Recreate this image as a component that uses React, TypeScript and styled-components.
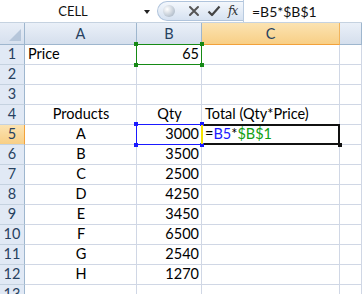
import React from "react";
import styled, { createGlobalStyle, css } from "styled-components";

const GlobalStyle = createGlobalStyle`
  html, body {
    margin: 0;
    padding: 0;
    background: #ffffff;
  }
  body {
    font-family: Lato, "Liberation Sans", sans-serif;
    width: 362px;
    height: 294px;
    overflow: hidden;
  }
`;

const Bar = styled.div`
  display: flex;
  height: 22px;
  border-bottom: 1px solid #c5d2e0;
  background: #ffffff;
`;

const NameBox = styled.div`
  width: 157px;
  display: flex;
  align-items: center;
  font-size: 13px;
  color: #111;
`;

const NameText = styled.span`
  flex: 1;
  text-align: center;
  padding-left: 2px;
`;

const Arrow = styled.span`
  width: 0;
  height: 0;
  border-left: 3.5px solid transparent;
  border-right: 3.5px solid transparent;
  border-top: 4px solid #222;
  margin-right: 7px;
  margin-top: 1px;
`;

const Buttons = styled.div`
  width: 86px;
  margin-top: 1px;
  height: 20px;
  display: flex;
  align-items: center;
  gap: 7px;
  padding-left: 5px;
  box-sizing: border-box;
  border-radius: 11px 0 0 11px;
  background: linear-gradient(#f3f7fc, #d6e2f1);
  border: 1px solid #b0c4dc;
  border-right: none;
`;

const Orb = styled.span`
  width: 12px;
  height: 12px;
  border-radius: 50%;
  background: radial-gradient(circle at 35% 35%, #ffffff, #b8c3cf 70%);
  margin-right: 6px;
`;

const Fx = styled.span`
  font-family: "DejaVu Serif", serif;
  font-style: italic;
  font-size: 12px;
  color: #333;
  letter-spacing: -1px;
`;

const FormulaInput = styled.div`
  flex: 1;
  display: flex;
  align-items: center;
  padding-left: 8px;
  font-size: 14px;
  color: #111;
  border-left: 1px solid #b9cbe0;
`;

const Sheet = styled.div`
  display: grid;
  grid-template-columns: 25px 112px 65px 138px 1fr;
  grid-auto-rows: 20px;
  grid-template-rows: 22px;
`;

const Corner = styled.div`
  background: linear-gradient(#e8eef7, #d6e0ee);
  border-right: 1px solid #9eb6ce;
  border-bottom: 1px solid #9eb6ce;
  position: relative;
  overflow: hidden;
`;

const Triangle = styled.span`
  position: absolute;
  right: 3px;
  bottom: 3px;
  width: 0;
  height: 0;
  border-left: 12px solid transparent;
  border-bottom: 12px solid #b6c6da;
`;

const ColHead = styled.div<{ $active?: boolean }>`
  display: flex;
  align-items: center;
  justify-content: center;
  font-size: 14.5px;
  color: #27415f;
  border-right: 1px solid #9eb6ce;
  border-bottom: 1px solid #9eb6ce;
  background: linear-gradient(#eaf0f8, #d5dfed);
  ${(p) =>
    p.$active &&
    css`
      background: linear-gradient(#fbe3b2, #f8cf86);
      border-bottom-color: #f2a13a;
      border-right-color: #f2b45c;
    `}
`;

const RowHead = styled.div<{ $active?: boolean }>`
  display: flex;
  align-items: flex-end;
  justify-content: center;
  padding-bottom: 2px;
  box-sizing: border-box;
  font-size: 14.5px;
  color: #27415f;
  border-right: 1px solid #9eb6ce;
  border-bottom: 1px solid #c5d2e0;
  background: #e1e9f5;
  ${(p) =>
    p.$active &&
    css`
      background: linear-gradient(#fbe3b2, #f8cf86);
      border-right-color: #f2a13a;
    `}
`;

const Cell = styled.div<{ $align?: "left" | "center" | "right" }>`
  position: relative;
  display: flex;
  align-items: flex-end;
  justify-content: ${(p) =>
    p.$align === "right" ? "flex-end" : p.$align === "center" ? "center" : "flex-start"};
  padding: 0 2px 2px 3px;
  box-sizing: border-box;
  font-size: 14.5px;
  color: #000;
  white-space: nowrap;
  border-right: 1px solid #d0d7e5;
  border-bottom: 1px solid #d0d7e5;
  background: #fff;
`;

const RefBox = styled.span<{ $color: string; $width?: number }>`
  position: absolute;
  left: -1px;
  top: -1px;
  right: -1px;
  bottom: -1px;
  border: ${(p) => p.$width ?? 1}px solid ${(p) => p.$color};
  pointer-events: none;
  z-index: 2;
`;

const Handle = styled.span<{ $color: string; $pos: "tl" | "tr" | "bl" | "br" }>`
  position: absolute;
  width: 4px;
  height: 4px;
  background: ${(p) => p.$color};
  z-index: 3;
  ${(p) => (p.$pos[0] === "t" ? "top: -3px;" : "bottom: -3px;")}
  ${(p) => (p.$pos[1] === "l" ? "left: -3px;" : "right: -3px;")}
`;

const Caret = styled.span`
  position: absolute;
  left: -1px;
  top: 0;
  bottom: 0;
  width: 2px;
  background: #f5e400;
  z-index: 4;
`;

const RefB5 = styled.span`
  color: #1a1aff;
`;

const RefB1 = styled.span`
  color: #12a012;
`;

const products: [string, number][] = [
  ["A", 3000],
  ["B", 3500],
  ["C", 2500],
  ["D", 4250],
  ["E", 3450],
  ["F", 6500],
  ["G", 2540],
  ["H", 1270],
];

const corners = ["tl", "tr", "bl", "br"] as const;

export default function App() {
  return (
    <>
      <GlobalStyle />
      <Bar>
        <NameBox>
          <NameText>CELL</NameText>
          <Arrow />
        </NameBox>
        <Buttons>
          <Orb />
          <svg width="12" height="12" viewBox="0 0 12 12">
            <path d="M2 2 L10 10 M10 2 L2 10" stroke="#555" strokeWidth="2" strokeLinecap="round" />
          </svg>
          <svg width="14" height="12" viewBox="0 0 14 12">
            <path d="M1.5 6.5 L5 10 L12.5 1.5" stroke="#444" strokeWidth="2.2" fill="none" strokeLinejoin="round" />
          </svg>
          <Fx>fx</Fx>
        </Buttons>
        <FormulaInput>=B5*$B$1</FormulaInput>
      </Bar>
      <Sheet>
        <Corner>
          <Triangle />
        </Corner>
        <ColHead>A</ColHead>
        <ColHead>B</ColHead>
        <ColHead $active>C</ColHead>
        <ColHead />

        <RowHead>1</RowHead>
        <Cell>Price</Cell>
        <Cell $align="right">
          65
          <RefBox $color="#168a16" />
          {corners.map((c) => (
            <Handle key={c} $color="#168a16" $pos={c} />
          ))}
        </Cell>
        <Cell />
        <Cell />

        {[2, 3].map((r) => (
          <React.Fragment key={r}>
            <RowHead>{r}</RowHead>
            <Cell />
            <Cell />
            <Cell />
            <Cell />
          </React.Fragment>
        ))}

        <RowHead>4</RowHead>
        <Cell $align="center">Products</Cell>
        <Cell $align="center">Qty</Cell>
        <Cell>Total (Qty*Price)</Cell>
        <Cell />

        {products.map(([name, qty], i) => {
          const row = i + 5;
          const first = i === 0;
          return (
            <React.Fragment key={name}>
              <RowHead $active={first}>{row}</RowHead>
              <Cell $align="center">{name}</Cell>
              <Cell $align="right">
                {qty}
                {first && <RefBox $color="#1a1aff" />}
                {first &&
                  corners.map((c) => <Handle key={c} $color="#1a1aff" $pos={c} />)}
              </Cell>
              <Cell>
                {first && (
                  <>
                    =<RefB5>B5</RefB5>*<RefB1>$B$1</RefB1>
                    <RefBox $color="#111" $width={2} />
                    <Caret />
                    <Handle $color="#111" $pos="br" />
                  </>
                )}
              </Cell>
              <Cell />
            </React.Fragment>
          );
        })}

        <RowHead>13</RowHead>
        <Cell />
        <Cell />
        <Cell />
        <Cell />
      </Sheet>
    </>
  );
}
